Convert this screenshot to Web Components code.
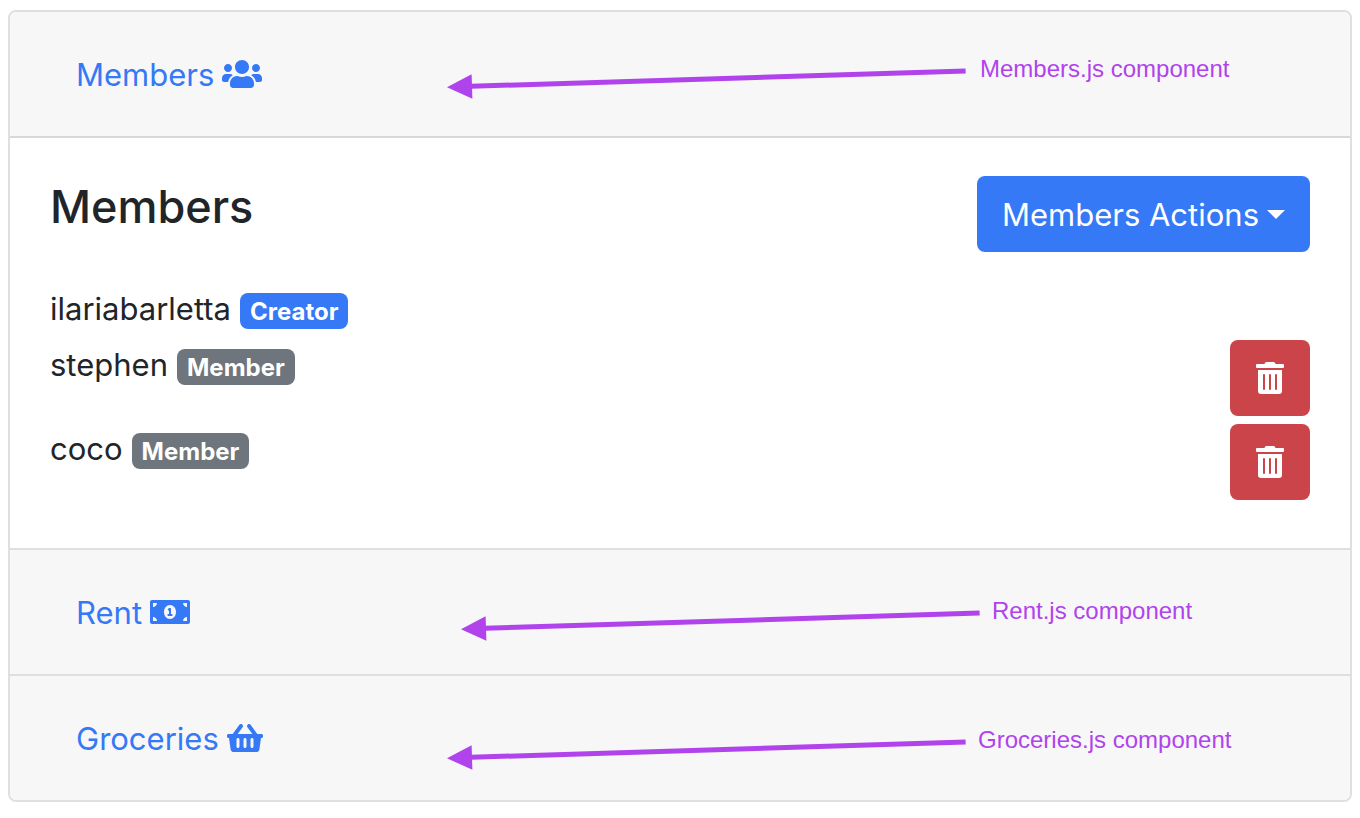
<!DOCTYPE html>
<html lang="en">
<head>
<meta charset="utf-8">
<meta name="viewport" content="width=device-width, initial-scale=1">
<title>Household</title>
<style>
  body {
    margin: 10px 8px;
    background: #fff;
    color: #212529;
    font: 400 31px/46px Inter, "Liberation Sans", sans-serif;
    --blue: #3579f6;
    --red: #ca444a;
    --grey: #6e757c;
    --purple: #b043ec;
    --line: #dfdfdf;
  }
</style>
</head>
<body>
<house-accordion>
  <accordion-section icon="users" open>
    <span slot="title">Members</span>
    <arrow-note slot="note" style="--x: 437px; --y: 45px; --gap: 14px">Members.js component</arrow-note>
    <members-panel>
      <member-row name="ilariabarletta" role-name="Creator"></member-row>
      <member-row name="stephen" role-name="Member" removable></member-row>
      <member-row name="coco" role-name="Member" removable></member-row>
    </members-panel>
  </accordion-section>
  <accordion-section icon="money">
    <span slot="title">Rent</span>
    <arrow-note slot="note" style="--x: 451px; --y: 49px; --gap: 12px">Rent.js component</arrow-note>
  </accordion-section>
  <accordion-section icon="basket">
    <span slot="title">Groceries</span>
    <arrow-note slot="note" style="--x: 437px; --y: 52px; --gap: 12px">Groceries.js component</arrow-note>
  </accordion-section>
</house-accordion>

<script>
const ICONS = {
  users: [640, 'M96 224c35.3 0 64-28.7 64-64s-28.7-64-64-64-64 28.7-64 64 28.7 64 64 64zm448 0c35.3 0 64-28.7 64-64s-28.7-64-64-64-64 28.7-64 64 28.7 64 64 64zm32 32h-64c-17.6 0-33.5 7.1-45.1 18.6 40.3 22.1 68.9 62 75.1 109.4h66c17.7 0 32-14.3 32-32v-32c0-35.3-28.7-64-64-64zm-256 0c61.9 0 112-50.1 112-112S381.9 32 320 32 208 82.1 208 144s50.1 112 112 112zm76.8 32h-8.3c-20.8 10-43.9 16-68.5 16s-47.6-6-68.5-16h-8.3C179.6 288 128 339.6 128 403.2V432c0 26.5 21.5 48 48 48h288c26.5 0 48-21.5 48-48v-28.8c0-63.6-51.6-115.2-115.2-115.2zm-223.7-13.4C161.5 263.1 145.6 256 128 256H64c-35.3 0-64 28.7-64 64v32c0 17.7 14.3 32 32 32h65.9c6.3-47.4 34.9-87.3 75.2-109.4z'],
  money: [640, 'M352 288h-16v-88c0-4.42-3.58-8-8-8h-13.58c-4.74 0-9.37 1.4-13.31 4.03l-15.33 10.22a7.994 7.994 0 0 0-2.22 11.09l8.88 13.31a7.994 7.994 0 0 0 11.09 2.22l.47-.31V288h-16c-4.42 0-8 3.58-8 8v16c0 4.42 3.58 8 8 8h64c4.42 0 8-3.58 8-8v-16c0-4.42-3.58-8-8-8zM608 64H32C14.33 64 0 78.33 0 96v320c0 17.67 14.33 32 32 32h576c17.67 0 32-14.33 32-32V96c0-17.67-14.33-32-32-32zM48 400v-64c35.35 0 64 28.65 64 64H48zm0-224v-64h64c0 35.35-28.65 64-64 64zm272 192c-53.02 0-96-50.15-96-112 0-61.86 42.98-112 96-112s96 50.13 96 112c0 61.87-43 112-96 112zm272 32h-64c0-35.35 28.65-64 64-64v64zm0-224c-35.35 0-64-28.65-64-64h64v64z'],
  basket: [576, 'M576 216v16c0 13.255-10.745 24-24 24h-8l-26.113 182.788C514.509 462.435 494.257 480 470.37 480H105.63c-23.887 0-44.139-17.565-47.518-41.212L32 256h-8c-13.255 0-24-10.745-24-24v-16c0-13.255 10.745-24 24-24h67.341l106.78-146.821c10.395-14.292 30.407-17.453 44.701-7.058 14.293 10.395 17.453 30.408 7.058 44.701L170.477 192h235.046L326.12 82.821c-10.395-14.292-7.234-34.306 7.059-44.701 14.291-10.395 34.306-7.235 44.701 7.058L484.659 192H552c13.255 0 24 10.745 24 24zM312 392V280c0-13.255-10.745-24-24-24s-24 10.745-24 24v112c0 13.255 10.745 24 24 24s24-10.745 24-24zm112 0V280c0-13.255-10.745-24-24-24s-24 10.745-24 24v112c0 13.255 10.745 24 24 24s24-10.745 24-24zm-224 0V280c0-13.255-10.745-24-24-24s-24 10.745-24 24v112c0 13.255 10.745 24 24 24s24-10.745 24-24z'],
  trash: [448, 'M32 464a48 48 0 0 0 48 48h288a48 48 0 0 0 48-48V128H32zm272-256a16 16 0 0 1 32 0v224a16 16 0 0 1-32 0zm-96 0a16 16 0 0 1 32 0v224a16 16 0 0 1-32 0zm-96 0a16 16 0 0 1 32 0v224a16 16 0 0 1-32 0zM432 32H312l-9.4-18.7A24 24 0 0 0 281.1 0H166.8a23.72 23.72 0 0 0-21.4 13.3L136 32H16A16 16 0 0 0 0 48v32a16 16 0 0 0 16 16h416a16 16 0 0 0 16-16V48a16 16 0 0 0-16-16z']
};

class BaseElement extends HTMLElement {
  constructor() {
    super();
    this.attachShadow({ mode: 'open' });
  }
  connectedCallback() {
    this.shadowRoot.innerHTML = this.render();
  }
}

customElements.define('ui-icon', class extends BaseElement {
  render() {
    const [width, path] = ICONS[this.getAttribute('name')];
    return `<style>
      :host { display: block; flex: none; }
      svg { display: block; height: 32px; width: ${width / 16}px; fill: currentColor; }
    </style>
    <svg viewBox="0 0 ${width} 512" aria-hidden="true"><path d="${path}"/></svg>`;
  }
});

customElements.define('house-accordion', class extends BaseElement {
  render() {
    return `<style>
      :host { display: block; border: 2px solid var(--line); border-radius: 8px; overflow: hidden; }
      ::slotted(accordion-section:not(:first-child)) { border-top: 2px solid var(--line); }
    </style><slot></slot>`;
  }
});

customElements.define('accordion-section', class extends BaseElement {
  render() {
    const open = this.hasAttribute('open');
    return `<style>
      :host { display: block; }
      header { position: relative; display: flex; padding: 24px 40px; background: #f7f7f7; }
      header.open { border-bottom: 2px solid #d8d8d8; }
      button {
        display: flex; align-items: center; gap: 8px; margin: 0; padding: 14px 26px;
        border: 0; background: none; color: var(--blue); font: inherit; cursor: pointer;
      }
      .title { padding-top: 2px; }
      .body { padding: 38px 40px 48px; }
    </style>
    <header class="${open ? 'open' : ''}">
      <button type="button" aria-expanded="${open}">
        <span class="title"><slot name="title"></slot></span><ui-icon name="${this.getAttribute('icon')}"></ui-icon>
      </button>
      <slot name="note"></slot>
    </header>
    ${open ? '<div class="body"><slot></slot></div>' : ''}`;
  }
});

/* A label with an arrow that lies over the section header. */
customElements.define('arrow-note', class extends BaseElement {
  render() {
    return `<style>
      :host {
        position: absolute; left: var(--x); top: var(--y);
        display: flex; align-items: flex-start; gap: var(--gap);
        color: var(--purple); font: 24px/24px "Liberation Sans", Arial, sans-serif; white-space: nowrap;
        pointer-events: none;
      }
      svg { display: block; flex: none; }
    </style>
    <svg width="519" height="44" viewBox="0 0 519 44" aria-hidden="true">
      <path d="M24 29.3 518.6 14" fill="none" stroke="currentColor" stroke-width="5"/>
      <path d="M0 30.3 24.6 17.2 25.4 41.8Z" fill="currentColor"/>
    </svg>
    <span><slot></slot></span>`;
  }
});

customElements.define('members-panel', class extends BaseElement {
  render() {
    return `<style>
      :host { display: block; }
      .top { display: flex; justify-content: space-between; align-items: flex-start; margin-bottom: 32px; }
      h2 { margin: 0; padding-top: 2px; font-size: 45px; line-height: 58px; font-weight: 500; }
      button {
        display: flex; align-items: center; gap: 8px; padding: 14px 25px; border: 0; border-radius: 8px;
        background: var(--blue); color: #fff; font: inherit; cursor: pointer;
      }
      .label { padding-top: 2px; }
      .caret { display: block; border: 9px solid transparent; border-top-color: #fff; border-bottom: 0; }
      .list { display: grid; gap: 8px; }
    </style>
    <div class="top">
      <h2>Members</h2>
      <button type="button" aria-haspopup="true"><span class="label">Members Actions</span><span class="caret"></span></button>
    </div>
    <div class="list" role="list"><slot></slot></div>`;
  }
});

customElements.define('member-row', class extends BaseElement {
  render() {
    const name = this.getAttribute('name');
    const role = this.getAttribute('role-name');
    this.setAttribute('role', 'listitem');
    return `<style>
      :host { display: flex; justify-content: space-between; align-items: flex-start; }
      .who { display: flex; align-items: center; gap: 9px; }
      .name { padding-top: 2px; }
      .badge {
        margin-top: 6px; padding: 7px 10px 5px; border-radius: 8px; background: var(--grey);
        color: #fff; font-size: 24px; line-height: 24px; font-weight: 700;
      }
      .badge.creator { background: var(--blue); }
      button {
        padding: 22px 26px; border: 0; border-radius: 8px;
        background: var(--red); color: #fff; cursor: pointer;
      }
    </style>
    <div class="who"><span class="name">${name}</span><span class="badge ${role.toLowerCase()}">${role}</span></div>
    ${this.hasAttribute('removable')
      ? `<button type="button" aria-label="Remove ${name}"><ui-icon name="trash"></ui-icon></button>` : ''}`;
  }
});
</script>
</body>
</html>
